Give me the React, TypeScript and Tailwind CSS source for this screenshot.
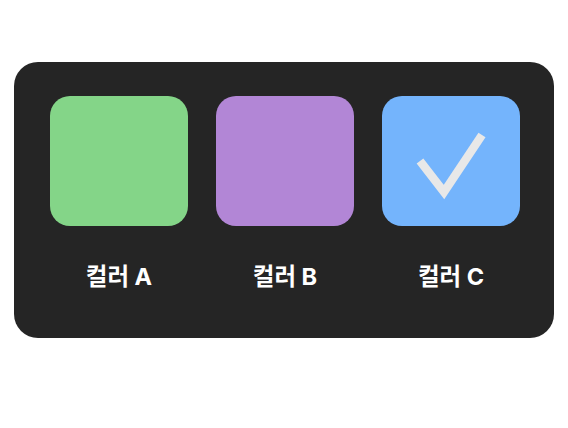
import React from 'react';

type Swatch = {
  label: string;
  color: string;
  selected?: boolean;
};

const swatches: Swatch[] = [
  { label: '컬러 A', color: 'bg-[#84d588]' },
  { label: '컬러 B', color: 'bg-[#b286d6]' },
  { label: '컬러 C', color: 'bg-[#74b4fc]', selected: true },
];

function CheckMark() {
  return (
    <svg width="138" height="130" viewBox="0 0 138 130" fill="none">
      <path d="M38 65 L62 96 L100 39" stroke="#e8e8e8" strokeWidth="8.5" strokeLinecap="butt" strokeLinejoin="miter" />
    </svg>
  );
}

export default function App() {
  return (
    <div className="min-h-[428px] w-[568px] bg-white pl-[14px] pt-[62px]" style={{ fontFamily: 'Inter, "Noto Sans CJK KR", sans-serif' }}>
      <div className="flex w-[540px] gap-[28px] rounded-[24px] bg-[#252525] pb-[47px] pl-[36px] pt-[34px]">
        {swatches.map(s => (
          <div key={s.label} className="flex w-[138px] flex-col items-center">
            <div className={`flex h-[130px] w-[138px] items-center justify-center rounded-[20px] ${s.color}`}>
              {s.selected && <CheckMark />}
            </div>
            <p className="mt-[37px] text-[23.5px] font-bold leading-[28px] text-white">{s.label}</p>
          </div>
        ))}
      </div>
    </div>
  );
}
